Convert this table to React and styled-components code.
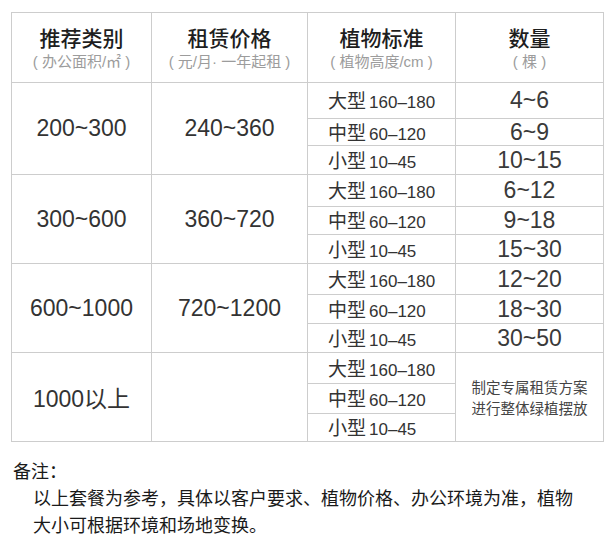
import React from "react";
import styled, { createGlobalStyle } from "styled-components";

const Global = createGlobalStyle`
  html, body { margin: 0; padding: 0; background: #fff; }
  body { font-family: "Liberation Sans", "Noto Sans CJK SC", sans-serif; }
`;

const Page = styled.div`
  padding: 12px 0 0 11px;
  width: 614px;
  box-sizing: border-box;
`;

const Grid = styled.div`
  display: grid;
  grid-template-columns: 139px 155px 147px 147px;
  grid-template-rows: 69px 35px 26px 28px 31px 27px 28px 30px 28px 28px 30px 29px 27px;
  gap: 1px;
  padding: 1px;
  background: #cdcdcd;
  width: fit-content;
`;

const Cell = styled.div`
  background: #fff;
  display: flex;
  align-items: center;
  justify-content: center;
  min-width: 0;
`;

const HeadCell = styled(Cell)`
  flex-direction: column;
  justify-content: flex-start;
  padding-top: 11px;
  box-sizing: border-box;
`;

const HeadTitle = styled.div`
  font-family: "Noto Sans CJK SC", sans-serif;
  font-size: 21px;
  line-height: 26px;
  font-weight: 500;
  color: #1e1e1e;
`;

const HeadSub = styled.div`
  font-family: "Liberation Sans", "Noto Sans CJK SC", sans-serif;
  font-size: 15px;
  line-height: 24px;
  color: #9c9c9c;
  white-space: pre;
`;

const GroupCell = styled(Cell)`
  grid-row: span 3;
  font-size: 23px;
  color: #333;
`;

const SizeCell = styled(Cell)`
  justify-content: flex-start;
  padding-left: 20px;
  color: #333;
`;

const SizeLabel = styled.span`
  line-height: 1;
`;

const SizeName = styled.span`
  font-family: "Noto Sans CJK SC", sans-serif;
  font-size: 19px;
  margin-right: 3px;
`;

const SizeRange = styled.span`
  font-size: 17px;
`;

const CountCell = styled(Cell)`
  font-size: 23px;
  color: #3a3a3a;
`;

const CustomCell = styled(Cell)`
  grid-row: span 3;
  flex-direction: column;
  font-family: "Noto Sans CJK SC", sans-serif;
  font-size: 14.5px;
  line-height: 21px;
  color: #444;
`;

const Note = styled.div`
  margin-top: 15px;
  padding-left: 2px;
  font-family: "Noto Sans CJK SC", sans-serif;
  font-size: 18px;
  line-height: 27px;
  color: #1a1a1a;
`;

const NoteBody = styled.p`
  margin: 0 0 0 20px;
  width: 548px;
`;

const sizes = [
  ["大型", "160–180"],
  ["中型", "60–120"],
  ["小型", "10–45"],
];

const groups = [
  { area: "200~300", price: "240~360", counts: ["4~6", "6~9", "10~15"] },
  { area: "300~600", price: "360~720", counts: ["6~12", "9~18", "15~30"] },
  { area: "600~1000", price: "720~1200", counts: ["12~20", "18~30", "30~50"] },
  { area: "1000以上", price: "", counts: null },
];

const headers = [
  ["推荐类别", "( 办公面积/㎡ )"],
  ["租赁价格", "( 元/月· 一年起租 )"],
  ["植物标准", "( 植物高度/cm )"],
  ["数量", "( 棵 )"],
];

function Size({ i }) {
  return (
    <SizeCell>
      <SizeLabel>
        <SizeName>{sizes[i][0]}</SizeName>
        <SizeRange>{sizes[i][1]}</SizeRange>
      </SizeLabel>
    </SizeCell>
  );
}

export default function App() {
  return (
    <>
      <Global />
      <Page>
        <Grid>
          {headers.map(([t, s]) => (
            <HeadCell key={t}>
              <HeadTitle>{t}</HeadTitle>
              <HeadSub>{s}</HeadSub>
            </HeadCell>
          ))}
          {groups.map((g) => (
            <React.Fragment key={g.area}>
              <GroupCell>{g.area}</GroupCell>
              <GroupCell>{g.price}</GroupCell>
              {g.counts ? (
                g.counts.map((c, i) => (
                  <React.Fragment key={i}>
                    <Size i={i} />
                    <CountCell>{c}</CountCell>
                  </React.Fragment>
                ))
              ) : (
                <>
                  <Size i={0} />
                  <CustomCell>
                    <div>制定专属租赁方案</div>
                    <div>进行整体绿植摆放</div>
                  </CustomCell>
                  <Size i={1} />
                  <Size i={2} />
                </>
              )}
            </React.Fragment>
          ))}
        </Grid>
        <Note>
          <div>备注：</div>
          <NoteBody>
            以上套餐为参考，具体以客户要求、植物价格、办公环境为准，植物大小可根据环境和场地变换。
          </NoteBody>
        </Note>
      </Page>
    </>
  );
}
